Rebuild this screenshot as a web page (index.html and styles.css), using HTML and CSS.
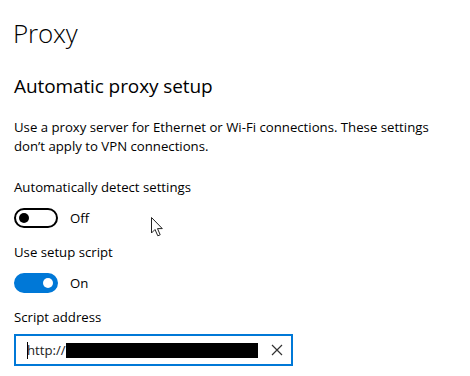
FILE: index.html
```html
<!doctype html>
<html lang="en">
    <head>
        <meta charset="UTF-8" />
        <title>Proxy</title>
        <link rel="stylesheet" href="styles.css">
    </head>
    <body>
        <h1>Proxy</h1>
        <h2>Automatic proxy setup</h2>
        <p class="intro">Use a proxy server for Ethernet or Wi-Fi connections. These settings don’t apply to VPN connections.</p>

        <!-- Auto detect -->
        <div class="setting">
            <div class="label">Automatically detect settings</div>
            <div class="toggle-row">
                <span class="toggle"><span class="knob"></span></span>
                <span class="state">Off</span>
            </div>
        </div>

        <!-- Setup script -->
        <div class="setting">
            <div class="label">Use setup script</div>
            <div class="toggle-row">
                <span class="toggle on"><span class="knob"></span></span>
                <span class="state">On</span>
            </div>
        </div>

        <!-- Script address -->
        <div class="setting">
            <div class="label">Script address</div>
            <div class="textbox">
                <span class="caret"></span>
                <span class="value">http://</span>
                <span class="redact"></span>
                <svg class="clear" width="12" height="12" viewBox="0 0 12 12">
                    <path d="M1 1 L11 11 M11 1 L1 11" stroke="#333" stroke-width="1.2" fill="none" />
                </svg>
            </div>
        </div>

        <svg class="pointer" width="14" height="22" viewBox="0 0 14 22">
            <path d="M1.5 1.5 L1.5 17 L5 13.5 L7.8 19.8 L10.2 18.8 L7.5 12.6 L12.3 12.6 Z" fill="#fff" stroke="#222" stroke-width="1" stroke-linejoin="miter" />
        </svg>
    </body>
</html>
```

FILE: styles.css
```css
body {
    font-family: "Open Sans", "Noto Sans", sans-serif;
    background-color: #fff;
    color: #000;
    margin: 0;
    padding: 0 14px;
    position: relative;
    width: 470px;
    height: 376px;
    overflow: hidden;
    box-sizing: border-box;
}
h1 {
    font-weight: 300;
    font-size: 26px;
    margin: 15px 0 0 -1px;
    line-height: 36px;
    letter-spacing: -0.2px;
}
h2 {
    font-weight: 400;
    font-size: 19px;
    margin: 22px 0 0;
    line-height: 26px;
    letter-spacing: -0.1px;
}
.intro {
    font-size: 13.2px;
    line-height: 19px;
    margin: 19px 0 0;
    width: 440px;
}
.setting {
    margin-top: 21px;
}
.setting + .setting {
    margin-top: 14px;
}
.label {
    font-size: 13.2px;
    line-height: 20px;
}
.toggle-row {
    display: flex;
    align-items: center;
    margin-top: 11px;
    height: 20px;
}
.toggle {
    width: 44px;
    height: 20px;
    border: 2px solid #000;
    border-radius: 10px;
    display: flex;
    align-items: center;
    padding: 0 3px;
    box-sizing: border-box;
}
.toggle .knob {
    width: 10px;
    height: 10px;
    border-radius: 50%;
    background: #000;
}
.toggle.on {
    background: #0078d7;
    border-color: #0078d7;
    justify-content: flex-end;
}
.toggle.on .knob {
    background: #fff;
}
.state {
    font-size: 13.2px;
    margin-left: 12px;
}
.textbox {
    margin-top: 7px;
    width: 279px;
    height: 32px;
    border: 2px solid #0078d7;
    display: flex;
    align-items: center;
    padding: 0 8px 0 11px;
    box-sizing: border-box;
}
.caret {
    width: 1px;
    height: 17px;
    background: #000;
}
.value {
    font-size: 13.2px;
    color: #222;
    margin-left: -1px;
}
.redact {
    width: 192px;
    height: 15px;
    background: #000;
}
.clear {
    margin-left: auto;
}
.pointer {
    position: absolute;
    left: 150px;
    top: 216px;
}
```
